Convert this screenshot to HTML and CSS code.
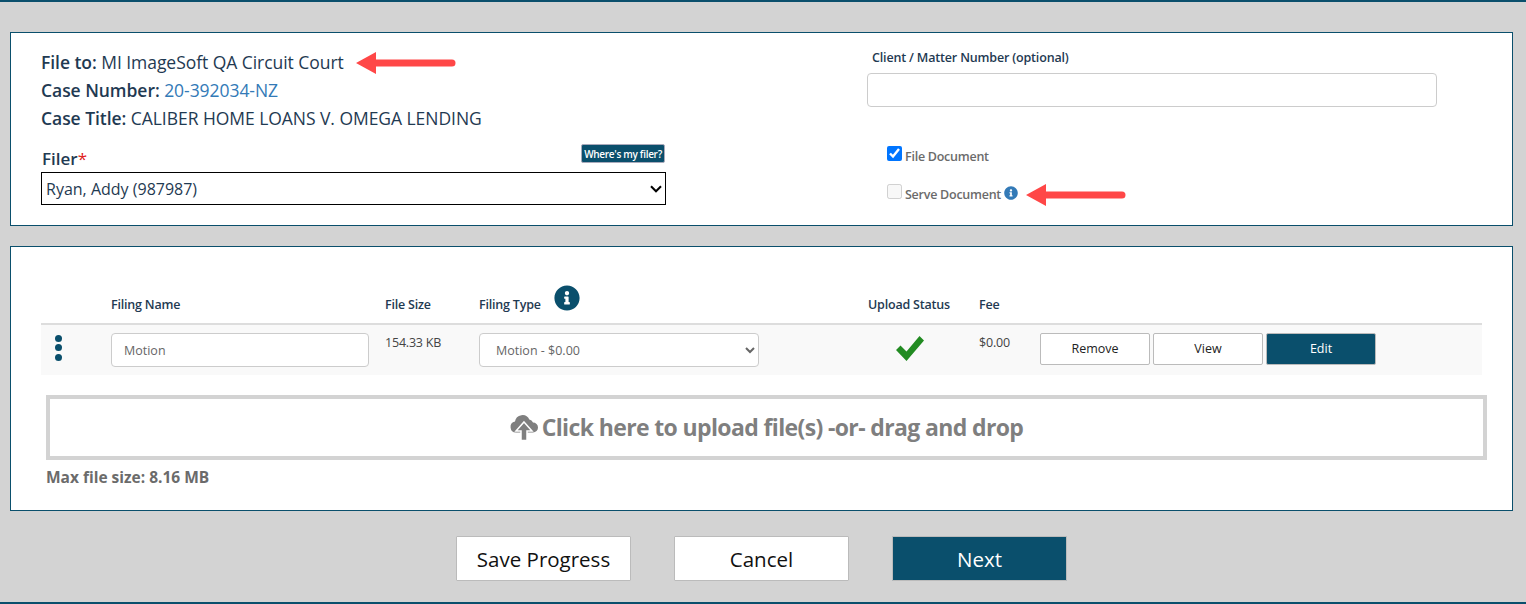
FILE: index.html
```html
<!DOCTYPE html>
<html lang="en">
<head>
<meta charset="utf-8">
<title>File document</title>
<link rel="stylesheet" href="styles.css">
</head>
<body>
<main class="page">
  <section class="panel panel-case">
    <div class="case-left">
      <p class="case-line"><b>File to:</b> MI ImageSoft QA Circuit Court</p>
      <p class="case-line"><b>Case Number:</b> <a class="case-link" href="#">20-392034-NZ</a></p>
      <p class="case-line"><b>Case Title:</b> CALIBER HOME LOANS V. OMEGA LENDING</p>
      <div class="filer-head">
        <label class="filer-label" for="filer">Filer<span class="req">*</span></label>
        <button class="filer-help" type="button">Where's my filer?</button>
      </div>
      <select class="filer-select" id="filer"><option>Ryan, Addy (987987)</option></select>
    </div>
    <div class="case-right">
      <label class="matter-label" for="matter">Client / Matter Number (optional)</label>
      <input class="matter-input" id="matter" type="text">
      <label class="check-row check-file"><input type="checkbox" checked><span class="check-text">File Document</span></label>
      <label class="check-row check-serve"><input type="checkbox" disabled><span class="check-text">Serve Document</span>
        <svg class="info-small" viewBox="0 0 512 512"><path d="M256 8C119.043 8 8 119.083 8 256c0 136.997 111.043 248 248 248s248-111.003 248-248C504 119.083 392.957 8 256 8zm0 110c23.196 0 42 18.804 42 42s-18.804 42-42 42-42-18.804-42-42 18.804-42 42-42zm56 254c0 6.627-5.373 12-12 12h-88c-6.627 0-12-5.373-12-12v-24c0-6.627 5.373-12 12-12h12v-64h-12c-6.627 0-12-5.373-12-12v-24c0-6.627 5.373-12 12-12h64c6.627 0 12 5.373 12 12v100h12c6.627 0 12 5.373 12 12v24z"/></svg>
      </label>
    </div>
    <svg class="arrow arrow-one" viewBox="0 0 100 22"><path d="M0 11 20 0V7.500H96a3.500 3.500 0 0 1 0 7H20V22z"/></svg>
    <svg class="arrow arrow-two" viewBox="0 0 100 22"><path d="M0 11 20 0V7.500H96a3.500 3.500 0 0 1 0 7H20V22z"/></svg>
  </section>

  <section class="panel panel-files">
    <div class="filing-grid filing-head">
      <span></span>
      <span>Filing Name</span>
      <span>File Size</span>
      <span class="type-head">Filing Type
        <svg class="info-large" viewBox="0 0 512 512"><path d="M256 8C119.043 8 8 119.083 8 256c0 136.997 111.043 248 248 248s248-111.003 248-248C504 119.083 392.957 8 256 8zm0 110c23.196 0 42 18.804 42 42s-18.804 42-42 42-42-18.804-42-42 18.804-42 42-42zm56 254c0 6.627-5.373 12-12 12h-88c-6.627 0-12-5.373-12-12v-24c0-6.627 5.373-12 12-12h12v-64h-12c-6.627 0-12-5.373-12-12v-24c0-6.627 5.373-12 12-12h64c6.627 0 12 5.373 12 12v100h12c6.627 0 12 5.373 12 12v24z"/></svg>
      </span>
      <span>Upload Status</span>
      <span>Fee</span>
      <span></span>
    </div>
    <div class="filing-grid filing-row">
      <span class="dots"><i></i><i></i><i></i></span>
      <input class="field name-field" type="text" value="Motion">
      <span class="cell-text">154.33 KB</span>
      <select class="field type-field"><option>Motion - $0.00</option></select>
      <svg class="status-check" viewBox="0 0 28 25"><path d="M10.500 25 0 14l4.500-4.500 6 6L23.500 0 28 4.500z"/></svg>
      <span class="cell-text">$0.00</span>
      <span class="row-actions">
        <button class="row-btn" type="button">Remove</button>
        <button class="row-btn" type="button">View</button>
        <button class="row-btn row-btn-primary" type="button">Edit</button>
      </span>
    </div>
    <div class="dropzone">
      <svg class="cloud" viewBox="0 0 28 28"><path class="cloud-body" d="M6 19.500a5.500 5.500 0 0 1-1-10.900 7.500 7.500 0 0 1 14.300-2A5 5 0 0 1 23 9.500a5 5 0 0 1 0 10z"/><path class="cloud-arrow" d="M14 9 22 18H17V27.500H11V18H6z"/></svg>
      <span>Click here to upload file(s) -or- drag and drop</span>
    </div>
    <p class="max-size">Max file size: 8.16 MB</p>
  </section>

  <div class="page-actions">
    <button class="page-btn" type="button">Save Progress</button>
    <button class="page-btn" type="button">Cancel</button>
    <button class="page-btn page-btn-primary" type="button">Next</button>
  </div>
</main>
</body>
</html>
```
FILE: styles.css
```css
* { box-sizing: border-box; }
html, body { margin: 0; padding: 0; }
body { background: #d3d3d3; font-family: "Open Sans", "Liberation Sans", sans-serif; color: #1f3a52; }
.page { height: 604px; border-top: 2px solid #0a4f6c; border-bottom: 2px solid #0a4f6c; padding: 30px 13px 0 10px; overflow: hidden; }
.panel { position: relative; background: #fff; border: 1px solid #0a4f6c; }
.panel-case { display: flex; height: 194px; padding: 15px 30px 0; }
.case-left { width: 625px; }
.case-line { margin: 0; font-size: 17.500px; line-height: 28px; letter-spacing: -0.05px; }
.case-line b { font-weight: 600; }
.case-link { color: #337ab7; text-decoration: none; }
.filer-head { display: flex; justify-content: space-between; align-items: flex-end; height: 40px; }
.filer-label { font-size: 17px; font-weight: 600; line-height: 24px; padding: 0 0 1px 1px; }
.req { color: #e02020; font-weight: 400; }
.filer-help { width: 84px; height: 19px; margin: 0 1px 9px 0; padding: 0; background: #0a4f6c; color: #fff; border: 1px solid #aab; border-radius: 2px; font: 600 10px "Open Sans", sans-serif; letter-spacing: -0.3px; }
.filer-select { display: block; width: 625px; height: 33px; appearance: none; background: #fff url("data:image/svg+xml,%3Csvg xmlns='http://www.w3.org/2000/svg' width='12' height='8'%3E%3Cpath d='M1 1.200 6 6.300 11 1.200' fill='none' stroke='%23000' stroke-width='2'/%3E%3C/svg%3E") no-repeat right 3px center; border: 1px solid #000; border-radius: 0; padding: 0 0 0 4px; font: 16px "Open Sans", sans-serif; color: #1f3a52; }
.case-right { margin-left: 201px; width: 570px; display: flex; flex-direction: column; align-items: flex-start; }
.matter-label { font-size: 12.500px; font-weight: 600; line-height: 18px; margin: 1px 0 6px 5px; letter-spacing: -0.17px; }
.matter-input { width: 570px; height: 34px; border: 1px solid #ccc; border-radius: 4px; background: #fff; }
.check-row { display: flex; align-items: flex-start; gap: 3px; font-size: 12.500px; font-weight: 600; color: #6b6b6b; margin-left: 20px; letter-spacing: -0.25px; height: 18px; }
.check-row input { margin: 1px 0 0; width: 15px; height: 15px; accent-color: #0075ff; }
.check-text { line-height: 18px; margin-top: 3px; }
.check-file { margin-top: 38px; }
.check-serve { margin-top: 20px; }
.info-small { width: 14px; height: 14px; fill: #337ab7; margin: 3px 0 0 0; }
.arrow { position: absolute; fill: #ff4747; }
.arrow-one { left: 345px; top: 19px; width: 100px; height: 22px; }
.arrow-two { left: 1015px; top: 151px; width: 100px; height: 22px; }
.panel-files { height: 265px; margin-top: 20px; padding: 0 30px; }
.filing-grid { display: grid; grid-template-columns: 70px 274px 94px 389px 111px 61px 1fr; width: 1441px; }
.filing-head { height: 78px; align-items: end; padding-bottom: 10px; border-bottom: 2px solid #ddd; font-size: 12.500px; font-weight: 600; letter-spacing: -0.2px; }
.type-head { display: flex; align-items: center; gap: 13px; height: 18px; }
.info-large { width: 26px; height: 26px; fill: #0a4f6c; margin-top: -12px; }
.filing-row { height: 50px; background: #f9f9f9; padding-top: 8px; align-items: start; }
.dots { display: flex; flex-direction: column; gap: 2.300px; padding: 2px 0 0 13.500px; }
.dots i { display: block; width: 7px; height: 7px; border-radius: 50%; background: #0a4f6c; }
.field { height: 34px; background: #fff; border: 1px solid #ccc; border-radius: 4px; font: 12.500px "Open Sans", sans-serif; color: #666; }
.name-field { width: 258px; padding: 0 12px; }
.type-field { width: 280px; padding: 0 12px; }
.cell-text { font-size: 12.500px; color: #444; padding-top: 1px; letter-spacing: -0.2px; }
.status-check { width: 28px; height: 25px; fill: #228b22; margin: 3px 0 0 28px; }
.row-actions { display: flex; gap: 3px; }
.row-btn { width: 110px; height: 32px; padding: 0 0 2px; background: #fff; border: 1px solid #bbb; border-radius: 2px; font: 12.500px "Open Sans", sans-serif; color: #222; }
.row-btn-primary { background: #0a4f6c; color: #fff; }
.dropzone { display: flex; align-items: center; justify-content: center; gap: 4px; width: 1441px; height: 65px; margin: 20px 0 0 5px; padding-bottom: 2px; background: #fff; border: 4px solid #d3d3d3; font-size: 23px; font-weight: 700; color: #7f7f7f; letter-spacing: -0.63px; }
.cloud { width: 28px; height: 28px; }
.cloud-body { fill: #7f7f7f; }
.cloud-arrow { fill: #7f7f7f; stroke: #fff; stroke-width: 1.500; }
.max-size { margin: 7px 0 0 5px; font-size: 15.500px; font-weight: 700; color: #6b6b6b; line-height: 20px; }
.page-actions { display: flex; justify-content: center; gap: 43px; padding: 25px 0 0 0; }
.page-btn { width: 175px; height: 45px; padding: 0; background: #fff; border: 1px solid #bbb; border-radius: 1px; font: 20.500px "Open Sans", sans-serif; color: #111; }
.page-btn-primary { background: #0a4f6c; color: #fff; }
```
